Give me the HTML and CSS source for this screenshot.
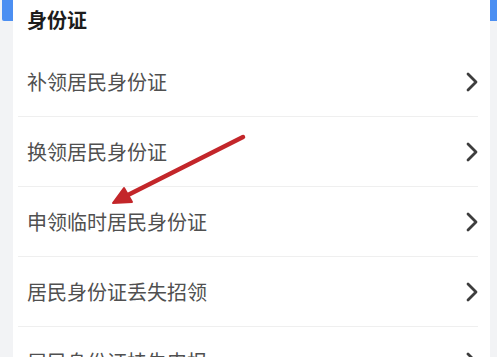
FILE: index.html
```html
<!DOCTYPE html>
<html lang="zh">
<head>
<meta charset="utf-8">
<link rel="stylesheet" href="styles.css">
</head>
<body>
<div class="page">
  <div class="side side-left"><div class="tab"></div></div>
  <div class="card">
    <div class="header">身份证</div>
    <div class="row"><span class="label">补领居民身份证</span><svg class="chev" viewBox="0 0 12 20" width="12" height="20"><polyline points="2,2 10,10 2,18" fill="none" stroke="#3d3d3d" stroke-width="2.8" stroke-linecap="round" stroke-linejoin="round"/></svg></div>
    <div class="row"><span class="label">换领居民身份证</span><svg class="chev" viewBox="0 0 12 20" width="12" height="20"><polyline points="2,2 10,10 2,18" fill="none" stroke="#3d3d3d" stroke-width="2.8" stroke-linecap="round" stroke-linejoin="round"/></svg></div>
    <div class="row"><span class="label">申领临时居民身份证</span><svg class="chev" viewBox="0 0 12 20" width="12" height="20"><polyline points="2,2 10,10 2,18" fill="none" stroke="#3d3d3d" stroke-width="2.8" stroke-linecap="round" stroke-linejoin="round"/></svg></div>
    <div class="row"><span class="label">居民身份证丢失招领</span><svg class="chev" viewBox="0 0 12 20" width="12" height="20"><polyline points="2,2 10,10 2,18" fill="none" stroke="#3d3d3d" stroke-width="2.8" stroke-linecap="round" stroke-linejoin="round"/></svg></div>
    <div class="row"><span class="label">居民身份证挂失申报</span><svg class="chev" viewBox="0 0 12 20" width="12" height="20"><polyline points="2,2 10,10 2,18" fill="none" stroke="#3d3d3d" stroke-width="2.8" stroke-linecap="round" stroke-linejoin="round"/></svg></div>
  </div>
  <div class="side side-right"><div class="tab"></div></div>
  <svg class="arrow" viewBox="0 0 497 357" width="497" height="357">
    <line x1="243" y1="137" x2="122" y2="198" stroke="#c3262a" stroke-width="4.5" stroke-linecap="round"/>
    <polygon points="113,203 124,188 132,202" fill="#c3262a" stroke="#c3262a" stroke-width="2" stroke-linejoin="round"/>
  </svg>
</div>
</body>
</html>
```

FILE: styles.css
```css
html, body {
  margin: 0;
  padding: 0;
  background: #ffffff;
}
body {
  font-family: "Noto Sans CJK SC", "Noto Sans", sans-serif;
  width: 497px;
  height: 357px;
  overflow: hidden;
}
.page {
  position: relative;
  display: flex;
  width: 497px;
  height: 357px;
  overflow: hidden;
}
.side {
  background: #f2f3f5;
  flex: none;
}
.side-left {
  width: 13px;
  display: flex;
  justify-content: flex-end;
}
.side-left .tab {
  width: 11px;
  height: 21px;
  background: #4c8ff2;
  border-bottom-left-radius: 2px;
}
.side-right {
  width: 7px;
}
.side-right .tab {
  width: 7px;
  height: 21px;
  background: #4c8ff2;
}
.card {
  flex: 1;
  background: #fff;
  padding: 0 12px 0 5px;
}
.header {
  height: 47px;
  box-sizing: border-box;
  padding: 6px 0 0 9px;
  font-size: 20px;
  line-height: 28px;
  font-weight: 700;
  color: #1c1c1c;
}
.row {
  height: 70px;
  box-sizing: border-box;
  border-bottom: 1px solid #efefef;
  display: flex;
  align-items: center;
  justify-content: space-between;
  padding-left: 9px;
}
.label {
  font-size: 20px;
  color: #505050;
  line-height: 28px;
}
.chev {
  flex: none;
  display: block;
}
.arrow {
  position: absolute;
  left: 0;
  top: 0;
  pointer-events: none;
}
```
